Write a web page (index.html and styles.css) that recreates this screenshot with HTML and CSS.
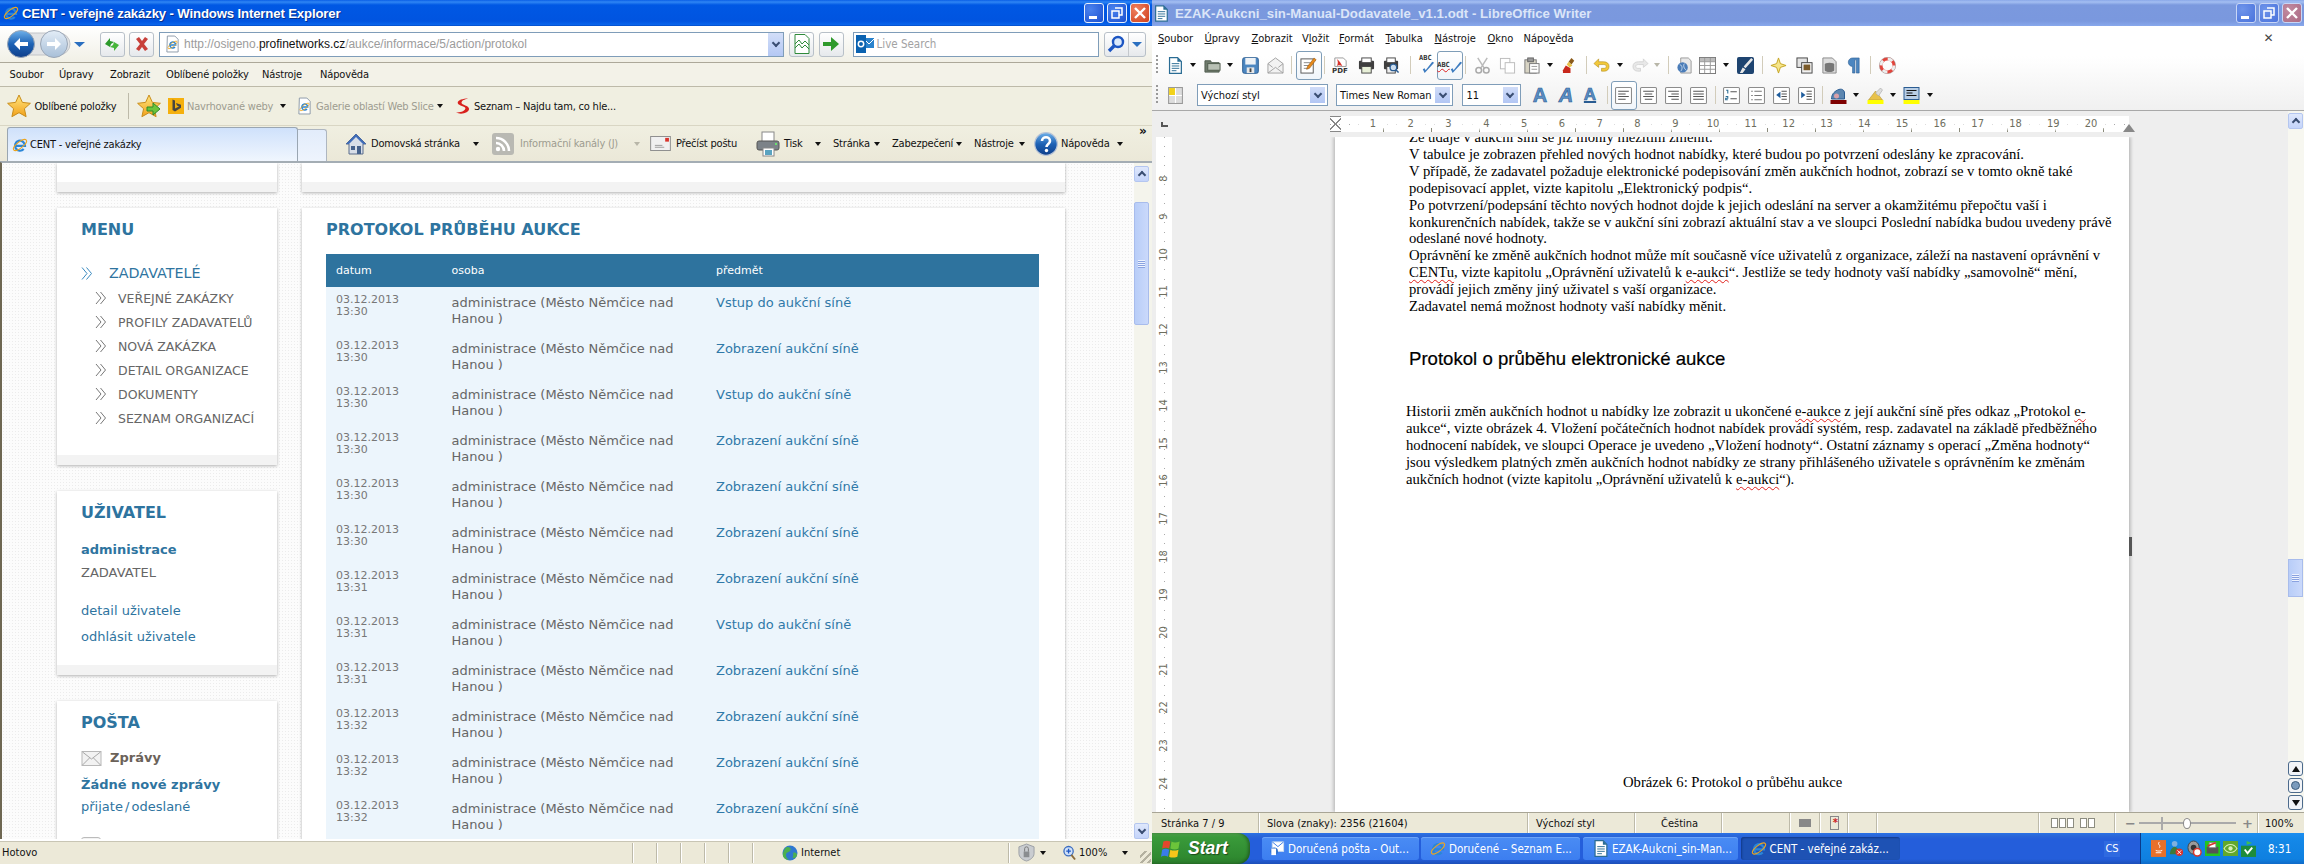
FILE: index.html
```html
<!DOCTYPE html>
<html lang="cs">
<head>
<meta charset="utf-8">
<title>CENT - veřejné zakázky</title>
<link rel="stylesheet" href="styles.css">
</head>
<body>
<svg class="defs" width="0" height="0" aria-hidden="true">
  <defs>
    <linearGradient id="gBlue" x1="0" y1="0" x2="0" y2="1"><stop offset="0" stop-color="#6fb1ea"/><stop offset=".5" stop-color="#1d62b5"/><stop offset="1" stop-color="#0f3f8a"/></linearGradient>
    <linearGradient id="gPale" x1="0" y1="0" x2="0" y2="1"><stop offset="0" stop-color="#e3edf7"/><stop offset="1" stop-color="#a8bfd8"/></linearGradient>
    <linearGradient id="gGold" x1="0" y1="0" x2="0" y2="1"><stop offset="0" stop-color="#ffe680"/><stop offset="1" stop-color="#f2a11a"/></linearGradient>
  </defs>
  <symbol id="ie" viewBox="0 0 16 16"><path d="M3.4 8.8h9.6a5 5 0 1 0-1.3 3.3" fill="none" stroke="#2a86d8" stroke-width="2.2"/><ellipse cx="8" cy="8" rx="8" ry="3" transform="rotate(-38 8 8)" fill="none" stroke="#eda51f" stroke-width="1"/></symbol>
  <symbol id="pageie" viewBox="0 0 16 18"><path d="M2.5.5h8l3.500 3.500v13.500h-12z" fill="#fff" stroke="#8a97a6"/><path d="M5 10h6.500a3.200 3.200 0 1 0-.8 2.200" fill="none" stroke="#2a86d8" stroke-width="1.500"/><ellipse cx="8" cy="10" rx="6" ry="2" transform="rotate(-38 8 10)" fill="none" stroke="#eda51f" stroke-width=".8"/></symbol>
  <symbol id="nav" viewBox="0 0 90 28"><rect x="2" y="3" width="62" height="22" rx="11" fill="#e2e4e6" stroke="#c2c4c8"/><circle cx="15" cy="14" r="13.500" fill="url(#gBlue)" stroke="#9aa6b6"/><path d="M8 14l6-6v4h8v4h-8v4z" fill="#fff"/><circle cx="48" cy="14" r="13.500" fill="url(#gPale)" stroke="#9aa6b6"/><path d="M55 14l-6-6v4h-8v4h8v4z" fill="#fff"/><path d="M68 12h11l-5.500 5z" fill="#2a6fc0"/></symbol>
  <symbol id="refresh" viewBox="0 0 18 18"><path d="M2 9l5-6v3l4 1-3 2-1 3z" fill="#2c9a2c"/><path d="M16 10l-5 6v-3l-4-1 3-2 1-3z" fill="#46b53a"/></symbol>
  <symbol id="stop" viewBox="0 0 16 16"><path d="M2 3l3-2 3 4 3-4 3 2-4 5 4 5-3 2-3-4-3 4-3-2 4-5z" fill="#c8403a"/></symbol>
  <symbol id="compat" viewBox="0 0 16 20"><path d="M1 .5h10l4 4v15H1z" fill="#fff" stroke="#2f8a3a"/><path d="M1 10l4-4 3 4 3-3 4 4M1 14l4-4 3 4 3-3 4 4" fill="none" stroke="#2f8a3a"/></symbol>
  <symbol id="go" viewBox="0 0 18 18"><path d="M1 7h8V2l8 7-8 7v-5H1z" fill="#2f9a2c"/></symbol>
  <symbol id="outlook" viewBox="0 0 18 18"><rect x="7" y="3" width="11" height="10" fill="#2a82cc"/><path d="M9 5l4 4 5-5" fill="none" stroke="#fff"/><rect y="0" width="10" height="18" fill="#0a62b0"/><circle cx="5" cy="9" r="2.700" fill="none" stroke="#fff" stroke-width="1.500"/></symbol>
  <symbol id="magnify" viewBox="0 0 18 18"><circle cx="11" cy="7" r="5" fill="#dbe9fb" stroke="#1c55c2" stroke-width="2.400"/><path d="M7 11l-5 5" stroke="#1c55c2" stroke-width="3.400"/></symbol>
  <symbol id="star" viewBox="0 0 24 24"><path d="M12 1l3.400 7.400 8 .9-6 5.400 1.700 8L12 18.700 4.900 22.700l1.700-8-6-5.400 8-.9z" fill="url(#gGold)" stroke="#c98d1a"/></symbol>
  <symbol id="staradd" viewBox="0 0 24 24"><path d="M12 1l3.400 7.400 8 .9-6 5.400 1.700 8L12 18.700 4.900 22.700l1.700-8-6-5.400 8-.9z" fill="url(#gGold)" stroke="#c98d1a"/><path d="M10 13h6V9l7 6-7 6v-4h-6z" fill="#6cc43a" stroke="#2f8a2a"/></symbol>
  <symbol id="bing" viewBox="0 0 16 16"><rect width="16" height="16" fill="#f5b00d"/><path d="M4.500 1.500l2.500 1v8l4-2-2-1-1-2.500 5 1.800v3l-6 3.700-2.500-1.500z" fill="#4a4640"/></symbol>
  <symbol id="seznam" viewBox="0 0 16 18"><path d="M14 1C8 1 2 3 3 6s9 3 8 6-6 4-10 4c6 3 14 0 14-4S6 8 7 5s5-3 7-4z" fill="#d8201c"/></symbol>
  <symbol id="home" viewBox="0 0 20 22"><path d="M10 1L0 11h3v10h14V11h3z" fill="#d8dee8" stroke="#5a6c8c"/><path d="M10 1L0 11h3l7-7 7 7h3z" fill="#3f6cb8"/><rect x="5" y="13" width="4" height="4" fill="#46628c"/><rect x="11" y="13" width="4" height="8" fill="#46628c"/></symbol>
  <symbol id="feed" viewBox="0 0 22 22"><rect width="22" height="22" rx="3" fill="#b9b9b3"/><circle cx="6" cy="16" r="2.200" fill="#fff"/><path d="M4 10a8 8 0 0 1 8 8M4 5a13 13 0 0 1 13 13" fill="none" stroke="#fff" stroke-width="2.600"/></symbol>
  <symbol id="mail" viewBox="0 0 22 16"><rect x=".5" y=".5" width="21" height="15" fill="#f0f0f0" stroke="#8a8a8a"/><path d="M5 10h8M5 12h10" stroke="#9a9a9a"/><rect x="16" y="2" width="4" height="4" fill="#d8342c"/></symbol>
  <symbol id="printer" viewBox="0 0 24 26"><rect x="6" y="1" width="12" height="10" fill="#fff" stroke="#888"/><rect x="1" y="10" width="22" height="9" rx="2" fill="#7c8288" stroke="#555"/><rect x="7" y="17" width="11" height="8" fill="#fff" stroke="#888"/><rect x="9" y="19" width="7" height="5" fill="#5aa3c0"/><circle cx="20" cy="13" r="1" fill="#6f6"/></symbol>
  <symbol id="help" viewBox="0 0 24 24"><circle cx="12" cy="12" r="11.300" fill="url(#gBlue)" stroke="#b8c4d6" stroke-width="1.200"/><path d="M8 9c0-5 8-5 8 0 0 3-3.500 3-3.500 6" fill="none" stroke="#fff" stroke-width="2.600"/><circle cx="12.500" cy="18.500" r="1.700" fill="#fff"/></symbol>
  <symbol id="globe" viewBox="0 0 16 16"><circle cx="8" cy="8" r="7.500" fill="#2f78d0"/><path d="M5 2c3 0 5 2 3 4s-4 1-4 4 2 4 3 5c-4 0-7-3-6-7s3-6 4-6zM11 8c2-1 4 0 4 2s-3 4-4 3 1-2 0-5z" fill="#4cb050"/></symbol>
  <symbol id="lock" viewBox="0 0 18 20"><path d="M9 1l8 3v7c0 4-4 7-8 8-4-1-8-4-8-8V4z" fill="#c9ccd0" stroke="#9a9ea4"/><rect x="6" y="9" width="6" height="6" fill="#8a8d90"/><path d="M7 9V6a2 2 0 0 1 4 0v3" fill="none" stroke="#777"/></symbol>
  <symbol id="zoomi" viewBox="0 0 14 16"><circle cx="6" cy="6" r="5" fill="#cfe0f8" stroke="#3a6cc0" stroke-width="1.400"/><path d="M3.500 6h5M6 3.500v5" stroke="#1c55c2" stroke-width="1.400"/><path d="M9 10l4 5" stroke="#8a6a3a" stroke-width="2"/></symbol>
  <symbol id="chev" viewBox="0 0 12 14"><path d="M1 1l5 6-5 6M5.500 1l5 6-5 6" fill="none" stroke="currentColor"/></symbol>
  <symbol id="env" viewBox="0 0 20 15"><rect x=".5" y=".5" width="19" height="14" fill="#f2f2f2" stroke="#b8b8b8" stroke-width="1"/><path d="M1 1l9 7 9-7M1 14l7-7M19 14l-7-7" fill="none" stroke="#a8a8a8"/></symbol>
  <symbol id="wdoc" viewBox="0 0 14 18"><path d="M.7.7h8.500l4 4v12.600H.7z" fill="#fff" stroke="#2a6c94" stroke-width="1.300"/><path d="M9 .7l4.200 4.200H9z" fill="#2a6c94"/><path d="M3 7h8M3 9.500h8M3 12h8M3 14.500h5" stroke="#2a6c94"/></symbol>
  <symbol id="wopen" viewBox="0 0 18 16"><path d="M1 3h6l1 2h8v10H1z" fill="#6e7a6c" stroke="#4e5a4c"/><rect x="4" y="6" width="13" height="7" fill="#b8c0b4" stroke="#4e5a4c"/></symbol>
  <symbol id="wsave" viewBox="0 0 18 18"><rect x=".7" y=".7" width="16.600" height="16.600" rx="2" fill="#4c86c0" stroke="#2a5c92"/><rect x="3.500" y="1" width="11" height="7" fill="#eef2f6"/><rect x="5" y="11" width="8" height="6" fill="#e8e8e8"/><rect x="8" y="12" width="2" height="4" fill="#444"/></symbol>
  <symbol id="wmail" viewBox="0 0 18 18"><path d="M1 7l8-6 8 6v10H1z" fill="#f2f2f2" stroke="#a0a0a0"/><path d="M1 17l8-6 8 6M1 7l5 4M17 7l-5 4" fill="none" stroke="#a0a0a0"/></symbol>
  <symbol id="wedit" viewBox="0 0 18 18"><rect x="1" y="2" width="13" height="15" fill="#fff" stroke="#555"/><path d="M4 6h7M4 9h6M4 12h4" stroke="#888"/><path d="M15 1l2 2-7 9-3 1 1-3z" fill="#e88a1a" stroke="#9a5a10" stroke-width=".7"/></symbol>
  <symbol id="wpdf" viewBox="0 0 18 18"><path d="M3 1h9l3 3v6H3z" fill="#fff" stroke="#999"/><path d="M5 2c3 2 5 5 6 8-3-2-5-1-6 0 1-2 2-5 0-8z" fill="#d8342c"/></symbol>
  <symbol id="wprint" viewBox="0 0 18 18"><rect x="1" y="4" width="16" height="9" rx="1" fill="#3e3e3e"/><rect x="4" y="1" width="10" height="5" fill="#fff" stroke="#444"/><rect x="4" y="10" width="10" height="7" fill="#e8f0d8" stroke="#444"/></symbol>
  <symbol id="wprev" viewBox="0 0 18 18"><rect x="1" y="4" width="15" height="9" rx="1" fill="#3e3e3e"/><rect x="4" y="1" width="9" height="5" fill="#fff" stroke="#444"/><rect x="4" y="10" width="9" height="7" fill="#eee" stroke="#444"/><circle cx="11" cy="11" r="3.500" fill="#cde" stroke="#2a5c92" stroke-width="1.400"/><path d="M13.500 13.500l3 3" stroke="#2a5c92" stroke-width="1.600"/></symbol>
  <symbol id="wabc" viewBox="0 0 18 18"><path d="M3 17l-2-4 2-1 1 2 7-9 2 1z" transform="translate(3 0)" fill="#3d7cc0"/></symbol>
  <symbol id="wcut" viewBox="0 0 18 18"><path d="M4 1l7 11M14 1L7 12" stroke="#bbb" stroke-width="1.600"/><circle cx="5" cy="14" r="3" fill="none" stroke="#aaa" stroke-width="1.600"/><circle cx="13" cy="14" r="3" fill="none" stroke="#aaa" stroke-width="1.600"/></symbol>
  <symbol id="wcopy" viewBox="0 0 18 18"><rect x="1.500" y="1.500" width="10" height="11" fill="#fff" stroke="#bbb"/><rect x="6.500" y="6" width="10" height="11" fill="#fff" stroke="#bbb"/></symbol>
  <symbol id="wpaste" viewBox="0 0 18 18"><rect x="2" y="3" width="12" height="14" fill="#d8d4c4" stroke="#777"/><rect x="5" y="1" width="6" height="4" fill="#999" stroke="#666"/><rect x="7" y="7" width="10" height="10" fill="#fff" stroke="#777"/><path d="M9 10h6M9 13h6" stroke="#999"/></symbol>
  <symbol id="wbrush" viewBox="0 0 18 18"><path d="M10 1l3 3-3 4-3-3z" fill="#8a5a1a"/><path d="M7 5l4 4-3 2-3-3z" fill="#e8c24a"/><path d="M4 9l5 3v5H1v-3z" fill="#c8281c"/></symbol>
  <symbol id="wundo" viewBox="0 0 18 18"><path d="M1 7l5-5v3h5c4 0 6 2 6 5s-2 5-5 5h-3v-3h3c1.500 0 2-1 2-2s-.5-2-3-2H6v3z" fill="#f2c83a" stroke="#b08a1a" stroke-width=".6"/></symbol>
  <symbol id="wredo" viewBox="0 0 18 18"><path d="M17 7l-5-5v3H7c-4 0-6 2-6 5s2 5 5 5h3v-3H6c-1.500 0-2-1-2-2s.5-2 3-2h5v3z" fill="#e8e8e8" stroke="#c4c4c4" stroke-width=".6"/></symbol>
  <symbol id="wlink" viewBox="0 0 18 18"><path d="M5 1h8l3 3v13H5z" fill="#e8e8e8" stroke="#999"/><circle cx="7" cy="11" r="5.500" fill="#4a7cb8"/><path d="M4 8c3 1 3 5 1 7M9 7c-2 2 0 6 2 7" stroke="#cde" fill="none"/></symbol>
  <symbol id="wtable" viewBox="0 0 18 18"><rect x=".5" y=".5" width="17" height="17" fill="#fff" stroke="#777"/><rect x="1" y="1" width="16" height="4" fill="#bbb"/><path d="M1 5h16M1 9h16M1 13h16M6 1v16M12 1v16" stroke="#999"/></symbol>
  <symbol id="wdraw" viewBox="0 0 18 18"><rect width="18" height="18" rx="2" fill="#1e4470"/><path d="M3 17l3-6 3 2-3 4zM7 10L15 1l2 2-8 9z" fill="#e8e8e8"/></symbol>
  <symbol id="wnav" viewBox="0 0 18 18"><path d="M9 1l2 6 6 2-6 2-2 6-2-6-6-2 6-2z" fill="#f6e58a" stroke="#c4a420"/></symbol>
  <symbol id="wgal" viewBox="0 0 18 18"><rect x="1" y="1" width="11" height="10" fill="#e4e4e4" stroke="#444"/><rect x="6" y="6" width="11" height="11" fill="#f2f2f2" stroke="#444"/><rect x="8" y="8" width="7" height="6" fill="#7a5a2a"/></symbol>
  <symbol id="wdb" viewBox="0 0 16 18"><path d="M1 1h10l4 4v12H1z" fill="#ddd" stroke="#888"/><ellipse cx="8" cy="8" rx="5" ry="2" fill="#777"/><path d="M3 8v6c0 2.500 10 2.500 10 0V8" fill="#777"/></symbol>
  <symbol id="wpil" viewBox="0 0 14 18"><path d="M13 1H6a4.500 4.500 0 0 0 0 9v7h2.500V3H10v14h3z" fill="#4c86c0" stroke="#2a5c92" stroke-width=".6"/></symbol>
  <symbol id="whelp" viewBox="0 0 18 18"><circle cx="9" cy="9" r="7" fill="none" stroke="#e2453c" stroke-width="3.400"/><circle cx="9" cy="9" r="7" fill="none" stroke="#eee" stroke-width="3.400" stroke-dasharray="5.500 5.500"/><circle cx="9" cy="9" r="8.700" fill="none" stroke="#999" stroke-width=".5"/></symbol>
  <symbol id="wstyles" viewBox="0 0 14 16"><rect x=".5" y=".5" width="13" height="15" fill="#ddd" stroke="#999"/><rect x="1" y="1" width="6" height="7" fill="#f2d21a"/><path d="M7 1v14M1 8h12" stroke="#fff"/></symbol>
  <symbol id="al" viewBox="0 0 16 16"><rect x=".5" y=".5" width="15" height="15" rx="1" fill="#fff" stroke="#8c8c8c"/><path d="M3 4h10M3 6.500h7M3 9h10M3 11.500h7" stroke="#555"/></symbol>
  <symbol id="ac" viewBox="0 0 16 16"><rect x=".5" y=".5" width="15" height="15" rx="1" fill="#fff" stroke="#8c8c8c"/><path d="M3 4h10M4.500 6.500h7M3 9h10M4.500 11.500h7" stroke="#555"/></symbol>
  <symbol id="ar" viewBox="0 0 16 16"><rect x=".5" y=".5" width="15" height="15" rx="1" fill="#fff" stroke="#8c8c8c"/><path d="M3 4h10M6 6.500h7M3 9h10M6 11.500h7" stroke="#555"/></symbol>
  <symbol id="aj" viewBox="0 0 16 16"><rect x=".5" y=".5" width="15" height="15" rx="1" fill="#fff" stroke="#8c8c8c"/><path d="M3 4h10M3 6.500h10M3 9h10M3 11.500h10" stroke="#555"/></symbol>
  <symbol id="num" viewBox="0 0 16 16"><rect x=".5" y=".5" width="15" height="15" rx="1" fill="#fff" stroke="#8c8c8c"/><path d="M7 4.500h6M7 11h6" stroke="#555"/><path d="M3 3h1.500v3M2.500 9h2v1.500h-2V12h2" fill="none" stroke="#2a6c94"/></symbol>
  <symbol id="bul" viewBox="0 0 16 16"><rect x=".5" y=".5" width="15" height="15" rx="1" fill="#fff" stroke="#8c8c8c"/><path d="M6 4h7M6 8h7M6 12h7M3 4h1.500M3 8h1.500M3 12h1.500" stroke="#777"/></symbol>
  <symbol id="ind1" viewBox="0 0 16 16"><rect x=".5" y=".5" width="15" height="15" rx="1" fill="#fff" stroke="#8c8c8c"/><path d="M8 4h5M8 6.500h5M8 9h5M8 11.500h5" stroke="#555"/><path d="M7 4.500v6L3 7.500z" fill="#1e5c9c"/></symbol>
  <symbol id="ind2" viewBox="0 0 16 16"><rect x=".5" y=".5" width="15" height="15" rx="1" fill="#fff" stroke="#8c8c8c"/><path d="M8 4h5M8 6.500h5M8 9h5M8 11.500h5" stroke="#555"/><path d="M3 4.500v6l4-3z" fill="#1e5c9c"/></symbol>
  <symbol id="wcolor" viewBox="0 0 16 17"><path d="M1 12c0-4 2-7 6-9 4-2 7 0 7 3v6z" fill="#5c86b0" stroke="#2a5c92"/><circle cx="6" cy="9" r="2.500" fill="#d8a0a8"/><rect y="13" width="16" height="4" fill="#7e0000"/></symbol>
  <symbol id="whigh" viewBox="0 0 16 17"><path d="M1 13l7-9 7 9z" fill="#e8c24a" stroke="#aa8a2a" stroke-width=".5"/><path d="M8 6l5-5 2 2-4 6z" fill="#ddd" stroke="#999" stroke-width=".5"/><rect y="13" width="16" height="4" fill="#ff0"/></symbol>
  <symbol id="wpara" viewBox="0 0 16 17"><rect x=".5" y=".5" width="15" height="12" fill="#b8cde4" stroke="#2a5c92"/><path d="M3 3.500h10M3 6h6M3 8.500h10" stroke="#111"/><rect y="13" width="16" height="4" fill="#ff0"/></symbol>
  <symbol id="winlogo" viewBox="0 0 18 18"><path d="M2 3c2-1 4-1 6 0l-1 6C5 8 3 8 1 9z" fill="#e2472c"/><path d="M9 3c2 1 4 1 7 0l-1 6c-2 1-4 1-7 0z" fill="#6cc43a"/><path d="M1 10c2-1 4-1 6 0l-1 6c-2-1-4-1-6 0z" fill="#3a7ce8"/><path d="M8 10c2 1 4 1 7 0l-1 6c-3 1-5 1-7 0z" fill="#f6c61a"/></symbol>
  <symbol id="tbout" viewBox="0 0 16 18"><rect x="3" y="2" width="12" height="10" fill="#fff" stroke="#cde"/><path d="M3 2l6 5 6-5" fill="none" stroke="#3a7ce8"/><circle cx="5" cy="12" r="4" fill="#2a6cc8"/><rect x="2" y="9" width="5" height="7" fill="#fff"/></symbol>
  <symbol id="tjava" viewBox="0 0 16 18"><rect width="16" height="18" fill="#e8702a"/><path d="M9 2c-3 3 2 3 0 6M5 11c2 1 5 1 7 0M5 13.500h6" stroke="#fff" fill="none"/></symbol>
  <symbol id="tnet" viewBox="0 0 16 18"><circle cx="6" cy="4" r="3" fill="#7fb0e0"/><path d="M1 15c0-5 3-8 5-8s5 3 5 8z" fill="#3d7a3a"/><circle cx="11" cy="13" r="4" fill="#d8342c"/><path d="M9 11l4 4m0-4l-4 4" stroke="#fff"/></symbol>
  <symbol id="tspk" viewBox="0 0 16 18"><ellipse cx="7" cy="8" rx="6" ry="7" fill="#9a9a9a" stroke="#444"/><circle cx="7" cy="8" r="3" fill="#333"/><circle cx="11" cy="13" r="4" fill="#fff" stroke="#d8342c" stroke-width="1.500"/></symbol>
  <symbol id="tprint" viewBox="0 0 18 18"><rect width="18" height="18" fill="#22c422"/><rect x="2" y="7" width="14" height="8" fill="#555"/><rect x="5" y="2" width="8" height="6" fill="#fff" stroke="#888"/><path d="M3 6l10-4" stroke="#d8342c" stroke-width="2"/></symbol>
  <symbol id="tnv" viewBox="0 0 14 14"><rect width="14" height="14" fill="#63a82c"/><path d="M1 7c3-5 9-5 12 0-3 5-9 5-12 0z" fill="none" stroke="#d8f0b8"/><circle cx="7" cy="7" r="2" fill="#d8f0b8"/></symbol>
  <symbol id="tflag" viewBox="0 0 16 18"><rect y="6" width="16" height="12" fill="#1e8c3c"/><path d="M4 10l3 4 5-6" stroke="#fff" stroke-width="2" fill="none"/><path d="M6 6V1l6 2-6 2" fill="#3fbf4f"/></symbol>
  <symbol id="minb" viewBox="0 0 20 20"><rect x="5" y="13" width="8" height="3" fill="#fff"/></symbol>
  <symbol id="maxb" viewBox="0 0 20 20"><path d="M8 5h7v7h-3M5 8h7v7H5z" fill="none" stroke="#fff" stroke-width="1.500"/></symbol>
  <symbol id="clsb" viewBox="0 0 20 20"><path d="M5 5l10 10M15 5L5 15" stroke="#fff" stroke-width="2.400"/></symbol>
</svg>

<div class="desk">
  <section class="ie">
    <header class="title">
      <svg class="i16"><use href="#ie"/></svg>
      <span class="title-text">CENT - veřejné zakázky - Windows Internet Explorer</span>
      <div class="winbtns">
        <span class="wb"><svg class="i20"><use href="#minb"/></svg></span>
        <span class="wb"><svg class="i20"><use href="#maxb"/></svg></span>
        <span class="wb wb-close"><svg class="i20"><use href="#clsb"/></svg></span>
      </div>
    </header>

    <div class="addr">
      <svg class="navsvg"><use href="#nav"/></svg>
      <span class="tbtn"><svg class="i18"><use href="#refresh"/></svg></span>
      <span class="tbtn"><svg class="i16"><use href="#stop"/></svg></span>
      <div class="urlbox">
        <svg class="i-page"><use href="#pageie"/></svg>
        <span class="url">http://osigeno.<b>profinetworks.cz</b>/aukce/informace/5/action/protokol</span>
        <span class="dd"><i class="vee"></i></span>
      </div>
      <span class="tbtn"><svg class="i-compat"><use href="#compat"/></svg></span>
      <span class="tbtn"><svg class="i18"><use href="#go"/></svg></span>
      <div class="searchbox">
        <svg class="i18"><use href="#outlook"/></svg>
        <span class="search-ph">Live Search</span>
      </div>
      <div class="searchbtn">
        <span class="sb-l"><svg class="i18"><use href="#magnify"/></svg></span>
        <span class="sb-r"><i class="tri tri-blue"></i></span>
      </div>
    </div>

    <nav class="menubar">
      <span>Soubor</span><span>Úpravy</span><span>Zobrazit</span><span>Oblíbené položky</span><span>Nástroje</span><span>Nápověda</span>
    </nav>

    <div class="favbar">
      <svg class="i24"><use href="#star"/></svg>
      <span>Oblíbené položky</span>
      <i class="vsep"></i>
      <svg class="i24"><use href="#staradd"/></svg>
      <svg class="i16"><use href="#bing"/></svg>
      <span class="dim">Navrhované weby</span>
      <i class="tri"></i>
      <svg class="i-page"><use href="#pageie"/></svg>
      <span class="dim">Galerie oblastí Web Slice</span>
      <i class="tri"></i>
      <svg class="i-page"><use href="#seznam"/></svg>
      <span>Seznam – Najdu tam, co hle...</span>
    </div>

    <div class="tabbar">
      <div class="tab">
        <svg class="i16"><use href="#ie"/></svg>
        <span>CENT - veřejné zakázky</span>
      </div>
      <div class="newtab"></div>
      <div class="tools">
        <svg class="i-home"><use href="#home"/></svg>
        <span>Domovská stránka</span>
        <i class="tri"></i>
        <svg class="i22"><use href="#feed"/></svg>
        <span class="dim">Informační kanály (J)</span>
        <i class="tri tri-dim"></i>
        <svg class="i-mail"><use href="#mail"/></svg>
        <span>Přečíst poštu</span>
        <svg class="i-print"><use href="#printer"/></svg>
        <span>Tisk</span>
        <i class="tri"></i>
        <span>Stránka</span>
        <i class="tri"></i>
        <span>Zabezpečení</span>
        <i class="tri"></i>
        <span>Nástroje</span>
        <i class="tri"></i>
        <svg class="i24"><use href="#help"/></svg>
        <span>Nápověda</span>
        <i class="tri"></i>
        <b class="more">»</b>
      </div>
    </div>

    <main class="content">
      <div class="site">
        <div class="col-left">
          <div class="card card-stub"><div class="stub-body"></div><div class="card-foot"></div></div>

          <section class="card">
            <div class="card-body menu-body">
              <h2>MENU</h2>
              <a class="top-link"><svg class="chev"><use href="#chev"/></svg>ZADAVATELÉ</a>
              <ul class="sub">
                <li><svg class="chev"><use href="#chev"/></svg>VEŘEJNÉ ZAKÁZKY</li>
                <li><svg class="chev"><use href="#chev"/></svg>PROFILY ZADAVATELŮ</li>
                <li><svg class="chev"><use href="#chev"/></svg>NOVÁ ZAKÁZKA</li>
                <li><svg class="chev"><use href="#chev"/></svg>DETAIL ORGANIZACE</li>
                <li><svg class="chev"><use href="#chev"/></svg>DOKUMENTY</li>
                <li><svg class="chev"><use href="#chev"/></svg>SEZNAM ORGANIZACÍ</li>
              </ul>
            </div>
            <div class="card-foot"></div>
          </section>

          <section class="card">
            <div class="card-body user-body">
              <h2>UŽIVATEL</h2>
              <p class="u-name">administrace</p>
              <p class="u-role">ZADAVATEL</p>
              <p class="u-l1"><a>detail uživatele</a></p>
              <p class="u-l2"><a>odhlásit uživatele</a></p>
            </div>
            <div class="card-foot"></div>
          </section>

          <section class="card">
            <div class="card-body mail-body">
              <h2>POŠTA</h2>
              <p class="m-head"><svg class="env"><use href="#env"/></svg>Zprávy</p>
              <p class="m-none">Žádné nové zprávy</p>
              <p class="m-links"><a>přijate</a> / <a>odeslané</a></p>
              <div class="m-next"></div>
            </div>
          </section>
        </div>

        <div class="col-right">
          <div class="card card-stub"><div class="stub-body"></div><div class="card-foot"></div></div>
          <section class="card">
            <div class="card-body main-body">
              <h2>PROTOKOL PRŮBĚHU AUKCE</h2>
              <table class="log">
                <thead><tr><th>datum</th><th>osoba</th><th>předmět</th></tr></thead>
                <tbody>
                  <tr><td class="d">03.12.2013<br>13:30</td><td>administrace (Město Němčice nad Hanou )</td><td><a>Vstup do aukční síně</a></td></tr>
                  <tr><td class="d">03.12.2013<br>13:30</td><td>administrace (Město Němčice nad Hanou )</td><td><a>Zobrazení aukční síně</a></td></tr>
                  <tr><td class="d">03.12.2013<br>13:30</td><td>administrace (Město Němčice nad Hanou )</td><td><a>Vstup do aukční síně</a></td></tr>
                  <tr><td class="d">03.12.2013<br>13:30</td><td>administrace (Město Němčice nad Hanou )</td><td><a>Zobrazení aukční síně</a></td></tr>
                  <tr><td class="d">03.12.2013<br>13:30</td><td>administrace (Město Němčice nad Hanou )</td><td><a>Zobrazení aukční síně</a></td></tr>
                  <tr><td class="d">03.12.2013<br>13:30</td><td>administrace (Město Němčice nad Hanou )</td><td><a>Zobrazení aukční síně</a></td></tr>
                  <tr><td class="d">03.12.2013<br>13:31</td><td>administrace (Město Němčice nad Hanou )</td><td><a>Zobrazení aukční síně</a></td></tr>
                  <tr><td class="d">03.12.2013<br>13:31</td><td>administrace (Město Němčice nad Hanou )</td><td><a>Vstup do aukční síně</a></td></tr>
                  <tr><td class="d">03.12.2013<br>13:31</td><td>administrace (Město Němčice nad Hanou )</td><td><a>Zobrazení aukční síně</a></td></tr>
                  <tr><td class="d">03.12.2013<br>13:32</td><td>administrace (Město Němčice nad Hanou )</td><td><a>Zobrazení aukční síně</a></td></tr>
                  <tr><td class="d">03.12.2013<br>13:32</td><td>administrace (Město Němčice nad Hanou )</td><td><a>Zobrazení aukční síně</a></td></tr>
                  <tr><td class="d">03.12.2013<br>13:32</td><td>administrace (Město Němčice nad Hanou )</td><td><a>Zobrazení aukční síně</a></td></tr>
                </tbody>
              </table>
            </div>
          </section>
        </div>
      </div>
      <aside class="iescroll">
        <span class="sbtn sbtn-up"><i class="up"></i></span>
        <span class="sthumb"><i class="grip"></i></span>
        <span class="sbtn sbtn-down"><i class="vee"></i></span>
      </aside>
    </main>

    <footer class="iestatus">
      <span>Hotovo</span>
      <i class="ssep"></i><i class="ssep"></i><i class="ssep"></i><i class="ssep"></i><i class="ssep"></i><i class="ssep"></i>
      <svg class="i16"><use href="#globe"/></svg>
      <span>Internet</span>
      <i class="ssep"></i>
      <svg class="i-lock"><use href="#lock"/></svg>
      <i class="tri"></i>
      <svg class="i-zoom"><use href="#zoomi"/></svg>
      <span>100%</span>
      <i class="tri"></i>
      <i class="sizegrip"></i>
    </footer>
  </section>

  <div class="rightside">
    <section class="writer">
      <header class="title title-off">
        <svg class="i-wdoc"><use href="#wdoc"/></svg>
        <span class="title-text">EZAK-Aukcni_sin-Manual-Dodavatele_v1.1.odt - LibreOffice Writer</span>
        <div class="winbtns">
          <span class="wb"><svg class="i20"><use href="#minb"/></svg></span>
          <span class="wb"><svg class="i20"><use href="#maxb"/></svg></span>
          <span class="wb wb-close"><svg class="i20"><use href="#clsb"/></svg></span>
        </div>
      </header>

      <div class="lo-top">
        <nav class="lo-menu">
          <span><u>S</u>oubor</span><span><u>Ú</u>pravy</span><span><u>Z</u>obrazit</span><span>V<u>l</u>ožit</span><span><u>F</u>ormát</span><span><u>T</u>abulka</span><span><u>N</u>ástroje</span><span><u>O</u>kno</span><span>Nápo<u>v</u>ěda</span>
          <b class="lo-close">✕</b>
        </nav>

        <div class="lo-tb lo-tb1">
          <i class="tgrip"></i>
          <b class="ic"><svg class="i-tb"><use href="#wdoc"/></svg></b><b class="ic"><i class="tri"></i></b>
          <b class="ic"><svg class="i-tb"><use href="#wopen"/></svg></b><b class="ic"><i class="tri"></i></b>
          <b class="ic"><svg class="i-tb"><use href="#wsave"/></svg></b>
          <b class="ic"><svg class="i-tb"><use href="#wmail"/></svg></b>
          <b class="ic"><i class="lsep"></i></b>
          <b class="ic ic-on"><svg class="i-tb"><use href="#wedit"/></svg></b>
          <b class="ic"><i class="lsep"></i></b>
          <b class="ic"><svg class="i-tb"><use href="#wpdf"/></svg><em class="pdf">PDF</em></b>
          <b class="ic"><svg class="i-tb"><use href="#wprint"/></svg></b>
          <b class="ic"><svg class="i-tb"><use href="#wprev"/></svg></b>
          <b class="ic"><i class="lsep"></i></b>
          <b class="ic"><em class="abc">ABC</em><svg class="i-tb"><use href="#wabc"/></svg></b>
          <b class="ic ic-on"><em class="abc abc-red">ABC</em><svg class="i-tb"><use href="#wabc"/></svg></b>
          <b class="ic"><i class="lsep"></i></b>
          <b class="ic"><svg class="i-tb"><use href="#wcut"/></svg></b>
          <b class="ic"><svg class="i-tb"><use href="#wcopy"/></svg></b>
          <b class="ic"><svg class="i-tb"><use href="#wpaste"/></svg></b>
          <b class="ic"><i class="tri"></i></b>
          <b class="ic"><svg class="i-tb"><use href="#wbrush"/></svg></b>
          <b class="ic"><i class="lsep"></i></b>
          <b class="ic"><svg class="i-tb"><use href="#wundo"/></svg></b>
          <b class="ic"><i class="tri"></i></b>
          <b class="ic"><svg class="i-tb"><use href="#wredo"/></svg></b>
          <b class="ic"><i class="tri tri-dim"></i></b>
          <b class="ic"><i class="lsep"></i></b>
          <b class="ic"><svg class="i-tb"><use href="#wlink"/></svg></b>
          <b class="ic"><svg class="i-tb"><use href="#wtable"/></svg></b>
          <b class="ic"><i class="tri"></i></b>
          <b class="ic"><svg class="i-tb"><use href="#wdraw"/></svg></b>
          <b class="ic"><i class="lsep"></i></b>
          <b class="ic"><svg class="i-tb"><use href="#wnav"/></svg></b>
          <b class="ic"><svg class="i-tb"><use href="#wgal"/></svg></b>
          <b class="ic"><svg class="i-tb"><use href="#wdb"/></svg></b>
          <b class="ic"><svg class="i-tb"><use href="#wpil"/></svg></b>
          <b class="ic"><i class="lsep"></i></b>
          <b class="ic"><svg class="i-tb"><use href="#whelp"/></svg></b>
        </div>

        <div class="lo-tb lo-tb2">
          <i class="tgrip"></i>
          <b class="ic"><svg class="i-tb"><use href="#wstyles"/></svg></b>
          <span class="combo combo-style">Výchozí styl<i class="cdd"><i class="vee"></i></i></span>
          <span class="combo combo-font">Times New Roman<i class="cdd"><i class="vee"></i></i></span>
          <span class="combo combo-size">11<i class="cdd"><i class="vee"></i></i></span>
          <b class="ic"><em class="bigA">A</em></b>
          <b class="ic"><em class="bigA bigA-i">A</em></b>
          <b class="ic"><em class="bigA bigA-u">A</em></b>
          <b class="ic"><i class="lsep"></i></b>
          <b class="ic ic-on ic-on2"><svg class="i-tb"><use href="#al"/></svg></b>
          <b class="ic"><svg class="i-tb"><use href="#ac"/></svg></b>
          <b class="ic"><svg class="i-tb"><use href="#ar"/></svg></b>
          <b class="ic"><svg class="i-tb"><use href="#aj"/></svg></b>
          <b class="ic"><i class="lsep"></i></b>
          <b class="ic"><svg class="i-tb"><use href="#num"/></svg></b>
          <b class="ic"><svg class="i-tb"><use href="#bul"/></svg></b>
          <b class="ic"><svg class="i-tb"><use href="#ind1"/></svg></b>
          <b class="ic"><svg class="i-tb"><use href="#ind2"/></svg></b>
          <b class="ic"><i class="lsep"></i></b>
          <b class="ic"><svg class="i-tb"><use href="#wcolor"/></svg></b>
          <b class="ic"><i class="tri"></i></b>
          <b class="ic"><svg class="i-tb"><use href="#whigh"/></svg></b>
          <b class="ic"><i class="tri"></i></b>
          <b class="ic"><svg class="i-tb"><use href="#wpara"/></svg></b>
          <b class="ic"><i class="tri"></i></b>
        </div>
      </div>

      <div class="lo-body">
        <div class="lo-main">
          <div class="hruler-row">
            <i class="corner"></i>
            <div class="hruler">
              <i class="hourglass"></i>
              <span>1</span><span>2</span><span>3</span><span>4</span><span>5</span><span>6</span><span>7</span><span>8</span><span>9</span><span>10</span><span>11</span><span>12</span><span>13</span><span>14</span><span>15</span><span>16</span><span>17</span><span>18</span><span>19</span><span>20</span>
              <i class="rmark"></i>
            </div>
          </div>
          <div class="doc">
            <div class="vruler">
              <span>8</span><span>9</span><span>10</span><span>11</span><span>12</span><span>13</span><span>14</span><span>15</span><span>16</span><span>17</span><span>18</span><span>19</span><span>20</span><span>21</span><span>22</span><span>23</span><span>24</span>
            </div>
            <article class="page">
              <div class="lines">
                <p>Že údaje v aukční síni se již mohly mezitím změnit.</p>
                <p>V tabulce je zobrazen přehled nových hodnot nabídky, které budou po potvrzení odeslány ke zpracování.</p>
                <p>V případě, že zadavatel požaduje elektronické podepisování změn aukčních hodnot, zobrazí se v tomto okně také</p>
                <p>podepisovací applet, vizte kapitolu „Elektronický podpis“.</p>
                <p>Po potvrzení/podepsání těchto nových hodnot dojde k jejich odeslání na server a okamžitému přepočtu vaší i</p>
                <p>konkurenčních nabídek, takže se v aukční síni zobrazí aktuální stav a ve sloupci Poslední nabídka budou uvedeny právě</p>
                <p>odeslané nové hodnoty.</p>
                <p>Oprávnění ke změně aukčních hodnot může mít současně více uživatelů z organizace, záleží na nastavení oprávnění v</p>
                <p><span class="sp">CENTu</span>, vizte kapitolu „Oprávnění uživatelů k <span class="sp">e-aukci</span>“. Jestliže se tedy hodnoty vaší nabídky „samovolně“ mění,</p>
                <p>provádí jejich změny jiný uživatel s vaší organizace.</p>
                <p>Zadavatel nemá možnost hodnoty vaší nabídky měnit.</p>
              </div>
              <h3>Protokol o průběhu elektronické aukce</h3>
              <div class="para">
                <p>Historii změn aukčních hodnot u nabídky lze zobrazit u ukončené <span class="sp">e-aukce</span> z její aukční síně přes odkaz „Protokol <span class="sp">e-</span></p>
                <p>aukce“, vizte obrázek 4. Vložení počátečních hodnot nabídek provádí systém, resp. zadavatel na základě předběžného</p>
                <p>hodnocení nabídek, ve sloupci Operace je uvedeno „Vložení hodnoty“. Ostatní záznamy s operací „Změna hodnoty“</p>
                <p>jsou výsledkem platných změn aukčních hodnot nabídky ze strany přihlášeného uživatele s oprávněním ke změnám</p>
                <p>aukčních hodnot (vizte kapitolu „Oprávnění uživatelů k <span class="sp">e-aukci</span>“).</p>
              </div>
              <p class="caption">Obrázek 6: Protokol o průběhu aukce</p>
              <i class="pagehandle"></i>
            </article>
            <div class="gutter"></div>
          </div>
        </div>
        <aside class="loscroll">
          <span class="sbtn"><i class="up"></i></span>
          <span class="lotrack"><i class="lothumb"><i class="grip"></i></i></span>
          <span class="nbtn"><i class="up-solid"></i></span>
          <span class="nbtn nbtn-c"><i class="dot"></i></span>
          <span class="nbtn"><i class="down-solid"></i></span>
        </aside>
      </div>

      <footer class="lostatus">
        <span>Stránka 7 / 9</span>
        <i class="ssep"></i>
        <span>Slova (znaky): 2356 (21604)</span>
        <i class="ssep"></i>
        <span>Výchozí styl</span>
        <i class="ssep"></i>
        <span>Čeština</span>
        <i class="ssep"></i>
        <i class="ssep"></i>
        <i class="st-rect"></i>
        <i class="ssep"></i>
        <i class="st-doc">*</i>
        <i class="ssep"></i>
        <i class="ssep"></i>
        <i class="ssep"></i>
        <span class="views"><i class="vp"></i><i class="vp"></i><i class="vp"></i><i class="vp vp-gap"></i><i class="vp"></i></span>
        <i class="ssep"></i>
        <b class="zm">−</b>
        <span class="slider"><i class="stick"></i><i class="knob"></i></span>
        <b class="zm">+</b>
        <i class="ssep"></i>
        <span>100%</span>
      </footer>
    </section>

    <footer class="taskbar">
      <div class="start"><svg class="i-win"><use href="#winlogo"/></svg><span>Start</span></div>
      <div class="tk"><svg class="i-tk"><use href="#tbout"/></svg><span>Doručená pošta - Out...</span></div>
      <div class="tk tk2"><svg class="i-tk"><use href="#ie"/></svg><span>Doručené – Seznam E...</span></div>
      <div class="tk tk3"><svg class="i-tk"><use href="#wdoc"/></svg><span>EZAK-Aukcni_sin-Man...</span></div>
      <div class="tk tk4 tk-on"><svg class="i-tk"><use href="#ie"/></svg><span>CENT - veřejné zakáz...</span></div>
      <span class="lang">CS</span>
      <div class="tray">
        <svg class="i-tr"><use href="#tjava"/></svg>
        <svg class="i-tr"><use href="#tnet"/></svg>
        <svg class="i-tr"><use href="#tspk"/></svg>
        <svg class="i-tr"><use href="#tprint"/></svg>
        <svg class="i-tr"><use href="#tnv"/></svg>
        <svg class="i-tr"><use href="#tflag"/></svg>
        <span class="clock">8:31</span>
      </div>
    </footer>
  </div>
</div>
</body>
</html>
```

FILE: styles.css
```css
* { box-sizing: border-box; }
html, body { margin: 0; padding: 0; }
body { width: 2304px; height: 864px; overflow: hidden; font-family: "DejaVu Sans Condensed", "DejaVu Sans", sans-serif; font-size: 11px; color: #111; }
.defs { position: absolute; }
svg { display: block; flex: none; }
p, h2, h3, ul { margin: 0; padding: 0; }
i, em, b.ic { font-style: normal; }

.desk { display: flex; width: 2304px; height: 864px; }
.ie { width: 1152px; height: 864px; display: flex; flex-direction: column; background: #ece9d8; }
.rightside { width: 1152px; height: 864px; display: flex; flex-direction: column; }
.writer { flex: 1; min-height: 0; display: flex; flex-direction: column; background: #fff; }

/* sizes */
.i16 { width: 16px; height: 16px; }
.i18 { width: 18px; height: 18px; }
.i20 { width: 20px; height: 20px; }
.i22 { width: 22px; height: 22px; }
.i24 { width: 24px; height: 24px; }
.i-page { width: 15px; height: 18px; }
.i-compat { width: 16px; height: 20px; }
.i-home { width: 20px; height: 22px; }
.i-mail { width: 21px; height: 15px; }
.i-print { width: 24px; height: 26px; }
.i-lock { width: 17px; height: 19px; }
.i-zoom { width: 13px; height: 16px; }
.i-wdoc { width: 13px; height: 17px; }
.i-tb { width: 17px; height: 17px; }
.navsvg { width: 90px; height: 28px; }

/* title bars */
.title { height: 26px; flex: none; display: flex; align-items: center; padding-left: 3px; background: linear-gradient(#0a5fe6 0, #2f86f4 2px, #0058e4 5px, #0054e0 21px, #0a66ec 25px, #0042b8 26px); }
.title-text { margin-left: 3px; color: #fff; font: bold 13.2px "Liberation Sans", sans-serif; letter-spacing: -.15px; text-shadow: 1px 1px 0 #0a2f8a; white-space: nowrap; }
.winbtns { margin-left: auto; display: flex; gap: 3px; padding-right: 2px; }
.wb { width: 20px; height: 20px; border: 1px solid #e8f0fc; border-radius: 3px; background: radial-gradient(circle at 30% 30%, #4a82ee, #1c50d0); overflow: hidden; }
.wb svg { margin: -1px; }
.wb-close { background: radial-gradient(circle at 30% 30%, #ee8060, #d0401c); }
.title-off { background: linear-gradient(#8aa8e8 0, #a4bff2 2px, #7b99de 5px, #7a98de 21px, #88a8ec 26px); padding-left: 3px; }
.title-off .title-text { color: #dbe5f8; text-shadow: none; margin-left: 7px; letter-spacing: .02px; }
.title-off .wb { background: radial-gradient(circle at 30% 30%, #6e94ea, #4a72dc); border-color: #c8d6f6; }
.title-off .wb-close { background: radial-gradient(circle at 30% 30%, #c08aa0, #ac6a84); }

/* address row */
.addr { height: 37px; flex: none; display: grid; align-items: center; padding-left: 6px; grid-template-columns: 93.5px 29.5px 30px 630px 29.5px 34px 251px auto; background: linear-gradient(#fff, #f1f0e6); border-bottom: 1px solid #aca899; }
.tbtn { width: 25px; height: 25px; border: 1px solid #b8c0c8; border-radius: 3px; background: linear-gradient(#fff, #e6e9ec); display: flex; align-items: center; justify-content: center; }
.urlbox { width: 625px; height: 25px; border: 1px solid #7f9db9; background: #fff; display: flex; align-items: center; padding-left: 5px; }
.url { margin-left: 4px; font: 12px "Liberation Sans", sans-serif; letter-spacing: -.03px; color: #9c9c9c; white-space: nowrap; }
.url b { font-weight: normal; color: #111; }
.dd { margin-left: auto; width: 15px; height: 23px; background: linear-gradient(#d2def8, #b4c8f4); display: flex; align-items: center; justify-content: center; }
.vee { display: block; width: 6px; height: 6px; border: solid #3a4e72; border-width: 0 2px 2px 0; transform: translateY(-1px) rotate(45deg); }
.up { display: block; width: 6px; height: 6px; border: solid #3a4e72; border-width: 2px 0 0 2px; transform: translateY(1px) rotate(45deg); }
.searchbox { width: 246px; height: 25px; border: 1px solid #7f9db9; background: #fff; display: flex; align-items: center; padding-left: 2px; }
.search-ph { margin-left: 3px; font-size: 11.5px; color: #a2a2a2; }
.searchbtn { width: 42px; height: 25px; border: 1px solid #b8c0c8; border-radius: 3px; display: flex; background: linear-gradient(#fff, #e6e9ec); }
.sb-l { width: 24px; display: flex; align-items: center; justify-content: center; border-right: 1px solid #c4c8cc; }
.sb-r { flex: 1; display: flex; align-items: center; justify-content: center; }

.tri { display: block; width: 0; height: 0; border: solid transparent; border-width: 4px 3.5px 0; border-top-color: #111; }
.tri-blue { border-top-color: #2a6fc0; border-width: 5px 5px 0; }
.tri-dim { border-top-color: #b8b6a8; }

/* IE bars */
.menubar { height: 24px; flex: none; display: grid; align-items: center; padding-left: 9.5px; grid-template-columns: 49.5px 51px 56px 96px 58px auto; background: #f3f2e8; border-bottom: 1px solid #bdbaa9; white-space: nowrap; letter-spacing: -.15px; }
.favbar { height: 39px; flex: none; display: grid; align-items: center; padding-left: 7px; grid-template-columns: 27.5px 93.5px 9px 31px 19px 93px 17px 19px 121px 18px 19px auto; background: #f0efe1; border-bottom: 1px solid #d9d6c4; white-space: nowrap; letter-spacing: -.2px; }
.vsep { display: block; width: 1px; height: 26px; background: #bdbaa9; }
.dim { color: #9d9c90; }
.tabbar { height: 36px; flex: none; display: flex; align-items: flex-end; padding-left: 7px; background: linear-gradient(#f0efe1, #ebe8d8); border-bottom: 1px solid #a4adb4; white-space: nowrap; letter-spacing: -.2px; }
.tab { width: 291px; height: 34px; display: flex; align-items: center; gap: 2px; padding-left: 4px; border: 1px solid #9aa6b2; border-bottom: 0; border-radius: 3px 3px 0 0; background: linear-gradient(#cfe1fb, #f0f6fe); }
.newtab { width: 29px; height: 32px; border: 1px solid #aeb6c0; border-left: 0; border-bottom: 0; border-radius: 0 3px 0 0; background: linear-gradient(#e2ecfb, #eef4fd); }
.tools { align-self: stretch; margin-left: 19px; flex: 1; display: grid; align-items: center; grid-template-columns: 25px 102px 19px 28px 114px 16px 26px 80px 28px 31px 18px 41px 18px 64px 18px 45px 15px 27px 56px 22px auto; }
.more { align-self: start; font: bold 12px "DejaVu Sans", sans-serif; line-height: 10px; margin-top: 0; }

/* status */
.iestatus { height: 25px; flex: none; display: grid; align-items: center; padding-left: 2px; grid-template-columns: 631px 24px 24px 24px 24px 24px 29px 19px 208px 9px 22px 23px 16px 43px 18px auto; background: #ece9d8; border-top: 2px solid #fff; box-shadow: inset 0 1px 0 #c8c5b4; white-space: nowrap; font-size: 11px; }
.ssep { display: block; width: 1px; height: 20px; background: #fff; box-shadow: -1px 0 0 #bdbaa9; }
.sizegrip { display: block; width: 11px; height: 12px; margin-top: 8px; background: repeating-linear-gradient(135deg, transparent 0 3px, #b4b1a0 3px 5px); }

/* content */
.content { flex: 1; min-height: 0; display: flex; border-left: 2px solid #6e6752; border-top: 1px solid #a4adb4; background-color: #fcfcfc; background-image: radial-gradient(circle, #ececec .6px, transparent .8px); background-size: 3px 3px; overflow: hidden; font-family: "DejaVu Sans", sans-serif; font-size: 13px; }
.site { flex: 1; min-width: 0; display: flex; padding-left: 55px; overflow: hidden; }
.col-left { width: 220px; flex: none; }
.col-right { width: 763px; flex: none; margin-left: 25px; }
.card { background: #fff; box-shadow: 0 1px 3px rgba(0,0,0,.3); margin-bottom: 26px; }
.card-stub { margin-bottom: 16px; }
.stub-body { height: 19px; }
.card-foot { height: 10px; background: #f3f3f3; }
.card-body { padding: 10px 0 0 24px; }
.card h2 { font-size: 16px; line-height: 24px; font-weight: bold; color: #2e749f; white-space: nowrap; }

.menu-body { padding-bottom: 25px; }
.top-link { display: flex; align-items: center; margin-top: 19px; font-size: 14.3px; line-height: 24px; color: #2e749f; }
.chev { width: 12px; height: 14px; }
.top-link .chev { width: 12px; height: 15px; margin-right: 16px; color: #3a8ac0; }
.sub { list-style: none; margin-top: 1px; padding-left: 14px; }
.sub li { display: flex; align-items: center; height: 24px; font-size: 12.5px; color: #666; white-space: nowrap; }
.sub .chev { margin-right: 11px; color: #777; }

.user-body { padding-bottom: 19px; }
.u-name { margin-top: 16px; font-weight: bold; line-height: 18px; color: #2e749f; }
.u-role { margin-top: 5px; line-height: 18px; color: #666; }
.u-l1 { margin-top: 20px; line-height: 18px; color: #2e749f; }
.u-l2 { margin-top: 8px; line-height: 18px; color: #2e749f; }

.m-head { display: flex; align-items: center; gap: 8px; margin-top: 13px; line-height: 20px; font-weight: bold; color: #6b6259; }
.env { width: 21px; height: 15px; }
.m-none { margin-top: 8px; line-height: 18px; font-weight: bold; color: #2e749f; }
.m-links { margin-top: 4px; line-height: 18px; color: #2e749f; word-spacing: -2px; }
.m-next { margin-top: 21px; width: 20px; height: 20px; border: 1px solid #bbb; border-radius: 3px; background: #f2f2f2; }

.main-body { padding-left: 24px; height: 660px; }
.log { margin-top: 12px; width: 713px; table-layout: fixed; border-collapse: collapse; background: #ecf5fc; }
.log th { height: 33px; padding: 0 0 0 10px; background: #2e739e; color: #fff; font-size: 11px; font-weight: normal; text-align: left; }
.log th:nth-child(1) { width: 115.5px; }
.log th:nth-child(2) { width: 264.5px; }
.log td { height: 46px; padding: 8px 20px 0 10px; vertical-align: top; line-height: 16px; color: #666; }
.log td.d { padding-top: 7px; font-size: 11px; line-height: 12px; color: #777; }
.log a { color: #3079a8; }

/* IE scrollbar */
.iescroll { width: 18px; flex: none; display: flex; flex-direction: column; padding: 3px 2px 0 0; background: #f4f4ec; position: relative; }
.sbtn { width: 15px; height: 16px; flex: none; display: flex; align-items: center; justify-content: center; border: 1px solid #b4c6f0; border-radius: 2px; background: linear-gradient(#dfe8fc, #c4d4fa); }
.sthumb { margin-top: 20px; width: 15px; height: 123px; display: flex; align-items: center; justify-content: center; border: 1px solid #a8bcec; border-radius: 2px; background: linear-gradient(90deg, #b8cdf8, #cad9fb); }
.sbtn-down { margin-top: auto; margin-bottom: 0; }
.grip { display: block; width: 7px; height: 8px; background: repeating-linear-gradient(#eef3fe 0 1px, #8aa2e0 1px 2px); }

/* writer top */
.lo-top { flex: none; background: linear-gradient(#fff 0, #fff 30px, #f0f0f0 100%); border-bottom: 1px solid #a8a8a8; height: 85px; }
.lo-menu { height: 24px; display: grid; align-items: center; padding-left: 6px; grid-template-columns: 46.5px 47px 50.5px 37px 46.5px 49px 53px 36px 740px auto; font-size: 11px; white-space: nowrap; }
.lo-close { font: bold 12px "DejaVu Sans", sans-serif; color: #444; }
.lo-tb { display: grid; align-items: center; padding-left: 5px; }
.lo-tb1 { height: 30px; grid-template-columns: 18px 18px 19px 18px 20px 25px 16px 17px 16px 16px 26px 25px 19px 17px 22px 16px 17px 25px 24px 19px 20px 16px 15px 19px 20px 17px 11px 16px 23px 19px 19px 17px 16px 26px 25px 24px 17px 17px auto; }
.lo-tb2 { height: 30px; grid-template-columns: 18px 22px 139px 125.5px 78.5px 26px 24px 17px 16px 25px 25px 25px 17px 16px 25px 25px 25px 16px 16px 18px 19px 18px 18px 19px auto; }
.ic { position: relative; width: 22px; height: 22px; margin-left: -11px; display: flex; align-items: center; justify-content: center; font-weight: normal; }
.ic-on::before { content: ""; position: absolute; left: -1px; top: -3px; width: 24px; height: 27px; border: 1px solid #7e9db8; border-radius: 3px; background: linear-gradient(#fff, #f0f5fa); }
.ic-on svg, .ic-on em { position: relative; }
.tgrip { display: block; width: 2px; height: 20px; margin-left: -1px; background: repeating-linear-gradient(#999 0 2px, transparent 2px 4px); }
.lsep { display: block; width: 1px; height: 18px; background: #d2ccba; }
.pdf { position: absolute; bottom: 1px; left: 3px; font: bold 7px "DejaVu Sans", sans-serif; color: #333; }
.abc { position: absolute; top: 0; left: 3px; font: bold 7px "DejaVu Sans Mono", monospace; color: #333; z-index: 1; }
.abc-red { position: absolute; text-decoration: underline wavy #d22; text-decoration-thickness: 1px; }
.combo { position: relative; height: 22px; display: flex; align-items: center; padding-left: 3px; border: 1px solid #7f9db9; background: #fff; font-size: 11px; white-space: nowrap; }
.combo-style { width: 131px; }
.combo-font { width: 117px; }
.combo-size { width: 59px; padding-left: 4px; }
.cdd { position: absolute; right: 2px; top: 2px; width: 15px; height: 16px; display: flex; align-items: center; justify-content: center; background: linear-gradient(#d0dcf8, #b2c6f4); }
.bigA { font: bold 20px "Liberation Sans", sans-serif; line-height: 22px; color: #5b8ec4; -webkit-text-stroke: .6px #2a5c92; }
.bigA-i { font-style: italic; }
.bigA-u { font-size: 17px; text-decoration: underline; text-decoration-thickness: 2px; }

/* writer body */
.lo-body { flex: 1; min-height: 0; display: flex; background: #eee; }
.lo-main { flex: 1; min-width: 0; display: flex; flex-direction: column; }
.hruler-row { height: 26px; flex: none; padding: 5px 0 0 178px; position: relative; }
.corner { position: absolute; left: 9px; top: 11px; width: 7px; height: 5px; border: solid #555; border-width: 0 0 2px 2px; }
.hruler { position: relative; width: 799px; height: 16px; padding-left: 24px; display: flex; background: #fff; font: 11px/16px "DejaVu Sans Condensed", "DejaVu Sans", sans-serif; color: #6e6e5e;
  background-image: repeating-linear-gradient(90deg, #aaa 0 1px, transparent 1px 9.45px), repeating-linear-gradient(90deg, #8a8a7a 0 1px, transparent 1px 48px);
  background-size: 100% 1px, calc(100% - 53px) 4px; background-position: 0 8px, 53px 100%; background-repeat: no-repeat; }
.hruler span { width: 37.8px; flex: none; text-align: center; background: radial-gradient(closest-side, #fff 60%, transparent); }
.hourglass { position: absolute; left: 0; top: 0; width: 11px; height: 16px; background: linear-gradient(#888,#888) top/100% 1px no-repeat, linear-gradient(#888,#888) bottom/100% 1px no-repeat, linear-gradient(45deg, transparent 46%, #888 46% 54%, transparent 54%), linear-gradient(-45deg, transparent 46%, #888 46% 54%, transparent 54%); }
.rmark { position: absolute; right: -6px; bottom: 0; width: 0; height: 0; border: solid transparent; border-width: 0 6px 8px; border-bottom-color: #888; }
.doc { flex: 1; min-height: 0; display: flex; overflow: hidden; padding-left: 4px; }
.vruler { width: 16px; flex: none; background: #fff; padding-top: 23px; display: flex; flex-direction: column; align-self: stretch; font: 11px/16px "DejaVu Sans Condensed", "DejaVu Sans", sans-serif; color: #6e6e5e;
  background-image: repeating-linear-gradient(#aaa 0 1px, transparent 1px 9.45px); background-size: 1px 100%; background-position: 8px 0; background-repeat: no-repeat; }
.vruler span { height: 37.8px; flex: none; writing-mode: vertical-rl; transform: rotate(180deg); text-align: center; }
.page { position: relative; margin-left: 163px; width: 794px; flex: none; padding-left: 74px; background: #fff; box-shadow: -2px 0 3px rgba(0,0,0,.18), 2px 0 3px rgba(0,0,0,.2); font: 14.67px "Liberation Serif", serif; color: #000; white-space: nowrap; }
.lines { margin-top: -8px; line-height: 16.9px; }
.page h3 { margin-top: 32px; font: 18.6px/24px "Liberation Sans", sans-serif; -webkit-text-stroke: .2px #000; }
.para { margin-top: 32.5px; margin-left: -3px; line-height: 17px; }
.para p { text-align-last: justify; }
.para p:nth-child(1), .para p:nth-child(4) { width: 679px; }
.para p:nth-child(2) { width: 686px; }
.para p:nth-child(3) { width: 684px; }
.para p:nth-child(5) { text-align-last: left; }
.caption { margin-top: 286px; margin-left: 214px; line-height: 17px; }
.sp { text-decoration: underline wavy #e0201c; text-decoration-thickness: 1px; text-underline-offset: 2px; }
.pagehandle { position: absolute; right: -3px; top: 400px; width: 3px; height: 19px; background: #555; }
.gutter { flex: 1; }

.loscroll { width: 16px; flex: none; display: flex; flex-direction: column; background: #f7f7f0; padding-top: 2px; }
.lotrack { flex: 1; position: relative; }
.lothumb { position: absolute; left: 0; top: 430px; width: 15px; height: 38px; display: flex; align-items: center; justify-content: center; border: 1px solid #a8bcec; background: linear-gradient(90deg, #b8cdf8, #cad9fb); }
.nbtn { width: 15px; height: 15px; margin-bottom: 2px; flex: none; display: flex; align-items: center; justify-content: center; border: 1px solid #4c6a8c; border-radius: 3px; background: #f2f4f8; }
.up-solid { display: block; border: solid transparent; border-width: 0 4px 6px; border-bottom-color: #111; }
.down-solid { display: block; border: solid transparent; border-width: 6px 4px 0; border-top-color: #111; }
.dot { display: block; width: 9px; height: 9px; border-radius: 50%; background: #7a9abc; border: 1px solid #3c5c7c; }

.lostatus { height: 21px; flex: none; display: grid; align-items: center; padding-left: 9px; grid-template-columns: 98px 8px 260.5px 8.5px 99px 26px 61px 68px 9px 21px 10px 18px 29px 162px 12px 64px 10px 14px 103px 16px 7px auto; background: #ece9d8; border-top: 1px solid #a8a595; font-size: 11px; white-space: nowrap; }
.st-rect { display: block; width: 12px; height: 8px; background: #888; }
.st-doc { display: block; width: 9px; height: 14px; border: 1px solid #888; color: #c22; font: bold 10px/12px "DejaVu Sans", sans-serif; text-align: right; }
.views { display: flex; gap: 1px; }
.vp { display: block; width: 7px; height: 10px; border: 1px solid #8c8c80; background: #fff; }
.vp-gap { margin-left: 5px; }
.zm { font: bold 13px "DejaVu Sans", sans-serif; color: #888; }
.slider { position: relative; display: block; width: 97px; height: 13px; background: linear-gradient(#aaa,#aaa) center/100% 2px no-repeat; }
.stick { position: absolute; left: 22px; top: 0; width: 2px; height: 13px; background: #aaa; }
.knob { position: absolute; left: 44px; top: 1px; width: 8px; height: 11px; border-radius: 50%; background: #fff; border: 1px solid #888; }

/* taskbar */
.taskbar { height: 31px; flex: none; display: grid; align-items: center; grid-template-columns: 110px 159px 162px 157.5px 363.5px 36px 164px; background: linear-gradient(#2a72e6 0, #2a66d8 3px, #245edb 6px, #245edb 26px, #1c4fb8 31px); color: #fff; font-size: 11.5px; white-space: nowrap; }
.start { width: 98px; height: 31px; display: flex; align-items: center; gap: 6px; padding-left: 9px; border-radius: 0 12px 12px 0; background: linear-gradient(#4fa34b 0, #3a9a3a 4px, #2f8a30 24px, #2a7a2a 31px); box-shadow: inset -2px 0 3px rgba(0,0,0,.3); }
.start span { font: italic bold 17.5px "Liberation Sans", sans-serif; text-shadow: 1px 1px 1px #1c4a1c; }
.i-win { width: 21px; height: 21px; }
.tk { width: 157px; height: 23px; display: flex; align-items: center; gap: 3px; padding-left: 7px; border-radius: 3px; background: linear-gradient(#4a8cf4, #3c7ef0); box-shadow: inset 0 1px 0 #6ca4f8; }
.tk2 { width: 159px; padding-left: 9px; }
.tk3 { width: 155px; padding-left: 10px; }
.tk4 { width: 159px; padding-left: 10px; }
.tk-on { background: #1e52b4; box-shadow: inset 1px 1px 2px #123a8a; }
.i-tk { width: 16px; height: 17px; }
.lang { justify-self: start; width: 16px; height: 16px; line-height: 16px; text-align: center; background: #2f6ae0; font-size: 11px; }
.tray { height: 31px; display: flex; align-items: center; gap: 3px; padding-left: 10px; background: linear-gradient(#1c8ef0, #1488e8 6px, #0f80e0 26px, #0f6ac8); border-left: 1px solid #0a3a8a; }
.i-tr { width: 15px; height: 17px; }
.clock { margin-left: 9px; font-size: 11.5px; }
```
